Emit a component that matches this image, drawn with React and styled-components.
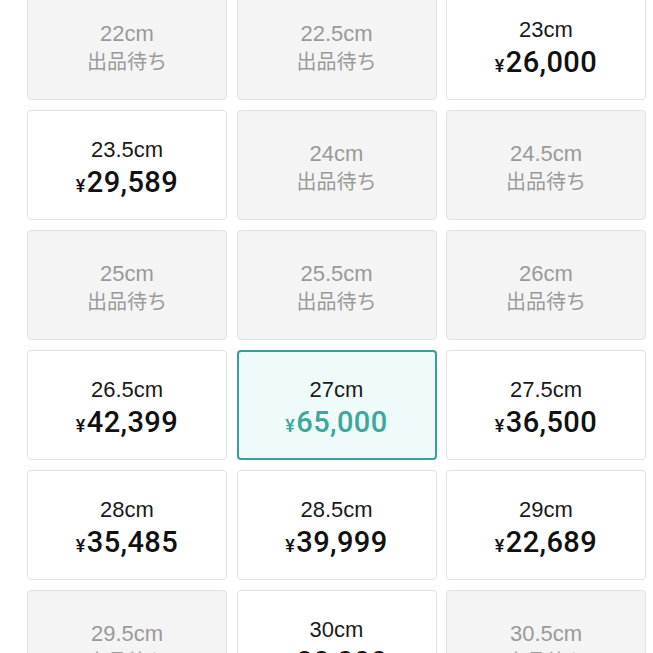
import React from "react";
import styled, { createGlobalStyle } from "styled-components";

const Global = createGlobalStyle`
  html, body { margin: 0; padding: 0; background: #ffffff; overflow: hidden; }
  body { font-family: "Liberation Sans", "Noto Sans CJK JP", sans-serif; }
`;

const Grid = styled.div`
  display: grid;
  grid-template-columns: repeat(3, 200px);
  grid-auto-rows: 110px;
  column-gap: 9.5px;
  row-gap: 10px;
  margin-top: -10px;
  padding-left: 27px;
  height: 663px;
  overflow: hidden;
`;

const Card = styled.div`
  box-sizing: border-box;
  display: flex;
  flex-direction: column;
  align-items: center;
  justify-content: center;
  border-radius: 4px;
  padding-top: ${(p) => (p.$disabled ? "3px" : "8px")};
  border: ${(p) => (p.$selected ? "2px solid #3a9f96" : "1px solid #e2e2e2")};
  background: ${(p) => (p.$selected ? "#effbfa" : p.$disabled ? "#f4f4f4" : "#ffffff")};
`;

const Size = styled.div`
  font-family: "Liberation Sans", "Noto Sans CJK JP", sans-serif;
  font-size: 22px;
  line-height: 27px;
  color: ${(p) => (p.$disabled ? "#9a9a9a" : "#1a1a1a")};
`;

const Waiting = styled.div`
  font-family: "Noto Sans CJK JP", sans-serif;
  font-size: 20px;
  line-height: 27px;
  color: #9a9a9a;
`;

const Price = styled.div`
  font-family: Roboto, "Liberation Sans", sans-serif;
  font-size: 29px;
  line-height: 35px;
  margin-top: 2px;
  font-weight: 500;
  letter-spacing: 0.4px;
  color: ${(p) => (p.$selected ? "#3aa89c" : "#111111")};
  display: flex;
  align-items: baseline;
`;

const Yen = styled.span`
  font-size: 18px;
  margin-right: 1px;
`;

const items = [
  { size: "22cm" },
  { size: "22.5cm" },
  { size: "23cm", price: "26,000" },
  { size: "23.5cm", price: "29,589" },
  { size: "24cm" },
  { size: "24.5cm" },
  { size: "25cm" },
  { size: "25.5cm" },
  { size: "26cm" },
  { size: "26.5cm", price: "42,399" },
  { size: "27cm", price: "65,000", selected: true },
  { size: "27.5cm", price: "36,500" },
  { size: "28cm", price: "35,485" },
  { size: "28.5cm", price: "39,999" },
  { size: "29cm", price: "22,689" },
  { size: "29.5cm" },
  { size: "30cm", price: "20,000" },
  { size: "30.5cm" },
];

export default function App() {
  return (
    <>
      <Global />
      <Grid>
        {items.map((it) => {
          const disabled = !it.price;
          return (
            <Card key={it.size} $disabled={disabled} $selected={it.selected}>
              <Size $disabled={disabled}>{it.size}</Size>
              {disabled ? (
                <Waiting>出品待ち</Waiting>
              ) : (
                <Price $selected={it.selected}>
                  <Yen>¥</Yen>
                  {it.price}
                </Price>
              )}
            </Card>
          );
        })}
      </Grid>
    </>
  );
}
